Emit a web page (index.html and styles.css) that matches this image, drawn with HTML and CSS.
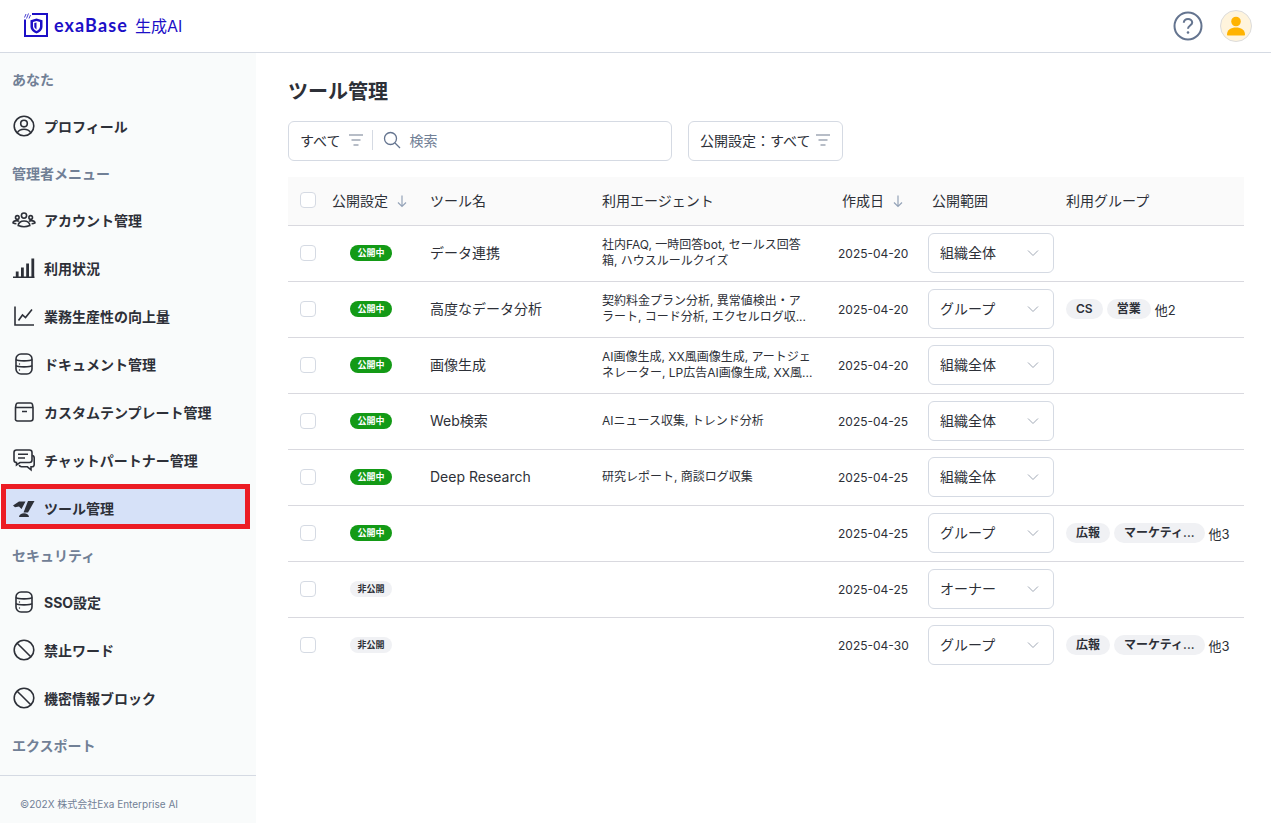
FILE: index.html
```html
<!DOCTYPE html>
<html lang="ja">
<head>
    <meta charset="UTF-8">
    <meta name="viewport" content="width=device-width, initial-scale=1.0">
    <title>ツール管理</title>
    <link rel="stylesheet" href="styles.css">
</head>
<body>
    <svg class="sprite" width="0" height="0">
        <symbol id="i-user" viewBox="0 0 24 24"><circle cx="12" cy="12" r="9.800"/><circle cx="12" cy="9.600" r="3.300"/><path d="M5.200 18.800c1.400-2.400 3.900-3.600 6.800-3.600s5.400 1.200 6.800 3.600"/></symbol>
        <symbol id="i-group" viewBox="0 0 24 24"><circle cx="12" cy="7.600" r="2.600"/><circle cx="5.300" cy="9.400" r="1.800"/><circle cx="18.700" cy="9.400" r="1.800"/><path d="M6.200 17.600c0-2.800 2.600-4.600 5.800-4.600s5.800 1.800 5.800 4.600c-3.400 1.400-8.200 1.400-11.600 0z"/><path d="M4.400 15.800c-1.500-.1-2.700-.5-3.400-1 .3-1.400 1.800-2.200 3.500-2.200 1 0 1.800.2 2.500.7"/><path d="M19.600 15.800c1.500-.1 2.700-.5 3.400-1-.3-1.400-1.800-2.200-3.500-2.200-1 0-1.800.2-2.500.7"/></symbol>
        <symbol id="i-bars" viewBox="0 0 24 24"><path class="fill" d="M1 20.600h21.500v1.400H1zM3.800 15.500h2.800v5.100H3.800zM9 11.500h2.800v9.100H9zM14.200 7.500H17v13.100h-2.800zM19.400 2.500h2.800v18.100h-2.800z"/></symbol>
        <symbol id="i-chart" viewBox="0 0 24 24"><path d="M3 2.500V21h19"/><path d="M6.500 16.500l4-5.500 3 2.500 6.500-8"/></symbol>
        <symbol id="i-db" viewBox="0 0 24 24"><rect x="4" y="2" width="16" height="20" rx="5"/><path d="M4 7.500c1.500 1.800 14.500 1.800 16 0M4 13.500c1.500 1.800 14.500 1.800 16 0"/><circle class="fill" cx="7.500" cy="12" r=".7"/><circle class="fill" cx="7.500" cy="18" r=".7"/></symbol>
        <symbol id="i-box" viewBox="0 0 24 24"><path d="M6.500 3h12c1 0 1.800.7 2 1.700l.5 2.800v11c0 1.400-1.100 2.500-2.500 2.500h-13C4.100 21 3 19.900 3.500 18.500v-11l.5-2.800C4.200 3.700 5 3 6 3z"/><path d="M3.800 7.500h17M10 11.500h5"/></symbol>
        <symbol id="i-chat" viewBox="0 0 24 24"><path d="M4.500 2h13c1.400 0 2.500 1.100 2.500 2.500v7.500c0 1.400-1.100 2.500-2.500 2.500H8L4.500 17v-2.500C3 14.500 2 13.400 2 12V4.500C2 3.100 3.100 2 4.500 2z"/><path d="M6 6.300h10M6 10h7"/><path d="M20.200 7.500c1.200.2 2 1.200 2 2.400v6.600c0 1.300-1 2.300-2.300 2.300h-.9v3l-3.600-3H9.500c-1.100 0-2-.7-2.300-1.700"/></symbol>
        <symbol id="i-tool" viewBox="0 0 24 24"><path class="fill" d="M1 9.500L7 5.500h6.500L9.500 13 7 10.500l-4 .8z"/><path class="fill" d="M16 5h6.500L16 16.500h-4.500z"/><path class="fill" d="M7 21c.3-2.500 2.400-3.700 5-3.700s4.700 1.200 5 3.700z"/></symbol>
        <symbol id="i-ban" viewBox="0 0 24 24"><circle cx="12" cy="12" r="9.800"/><path d="M5.200 5.200l13.600 13.600"/></symbol>
        <symbol id="i-filter" viewBox="0 0 16 16"><path d="M1 3h14M3.500 8h9M5.500 13h5"/></symbol>
        <symbol id="i-down" viewBox="0 0 12 14"><path d="M6 1.500v11M2 8.500l4 4 4-4"/></symbol>
        <symbol id="i-chev" viewBox="0 0 12 12"><path d="M1 3.500l5 5 5-5"/></symbol>
    </svg>

    <header class="topbar">
        <div class="logo">
            <svg class="logo-mark" viewBox="0 0 24 24" width="24" height="24">
                <path class="logo-line" d="M1 6.500v16.500h22V1H8"/>
                <path class="logo-line thin" d="M.5 4.500l1.500-3.500M2.500 5.500L4.500 .5M5 5.500l1.500-3.500"/>
                <path class="logo-shield" d="M12.500 5.500l6 1.800v6.200c0 3.500-3 6-6 7-3-1-6-3.500-6-7V7.300z"/>
                <path class="logo-dot" d="M12.500 8l3.500 1.100v4.300c0 2.200-1.700 3.800-3.500 4.600-1.800-.8-3.500-2.400-3.500-4.600V9.100z"/>
                <path class="logo-shield" d="M12.500 9.500v7c-1.300-.7-2.200-1.900-2.200-3.200v-3.200z"/>
            </svg>
            <span class="logo-name">exaBase</span>
            <span class="logo-sub">生成AI</span>
        </div>
        <div class="top-actions">
            <svg class="help" viewBox="0 0 30 30" width="30" height="30">
                <circle cx="15" cy="15" r="13.500"/>
                <path d="M10.800 11.800c0-2.400 1.900-3.900 4.200-3.900s4.200 1.500 4.200 3.600c0 3-4.200 3.100-4.200 6.200"/>
                <circle class="dot" cx="15" cy="21.500" r="1.300"/>
            </svg>
            <div class="avatar">
                <svg viewBox="0 0 32 32" width="32" height="32">
                    <circle cx="16" cy="11.500" r="4.800"/>
                    <path d="M7 24.500c0-4.500 4-7 9-7s9 2.500 9 7c0 .6-.4 1-1 1H8c-.6 0-1-.4-1-1z"/>
                </svg>
            </div>
        </div>
    </header>

    <div class="layout">
        <aside class="sidebar">
            <nav class="nav">
                <div class="nav-title">あなた</div>
                <a class="nav-item"><svg class="nav-icon"><use href="#i-user"/></svg>プロフィール</a>
                <div class="nav-title">管理者メニュー</div>
                <a class="nav-item"><svg class="nav-icon"><use href="#i-group"/></svg>アカウント管理</a>
                <a class="nav-item"><svg class="nav-icon"><use href="#i-bars"/></svg>利用状況</a>
                <a class="nav-item"><svg class="nav-icon"><use href="#i-chart"/></svg>業務生産性の向上量</a>
                <a class="nav-item"><svg class="nav-icon"><use href="#i-db"/></svg>ドキュメント管理</a>
                <a class="nav-item"><svg class="nav-icon"><use href="#i-box"/></svg>カスタムテンプレート管理</a>
                <a class="nav-item"><svg class="nav-icon"><use href="#i-chat"/></svg>チャットパートナー管理</a>
                <a class="nav-item active"><svg class="nav-icon"><use href="#i-tool"/></svg>ツール管理</a>
                <div class="nav-title">セキュリティ</div>
                <a class="nav-item"><svg class="nav-icon"><use href="#i-db"/></svg>SSO設定</a>
                <a class="nav-item"><svg class="nav-icon"><use href="#i-ban"/></svg>禁止ワード</a>
                <a class="nav-item"><svg class="nav-icon"><use href="#i-ban"/></svg>機密情報ブロック</a>
                <div class="nav-title">エクスポート</div>
            </nav>
            <footer class="copyright">©202X 株式会社Exa Enterprise AI</footer>
        </aside>

        <main class="main">
            <h1>ツール管理</h1>

            <div class="filters">
                <div class="search-box">
                    <span class="filter-label">すべて</span>
                    <svg class="filter-icon"><use href="#i-filter"/></svg>
                    <span class="divider"></span>
                    <svg class="search-icon" viewBox="0 0 18 18" width="18" height="18"><circle cx="7.500" cy="7.500" r="6"/><path d="M12 12l5 5"/></svg>
                    <span class="search-placeholder">検索</span>
                </div>
                <div class="filter-btn">
                    <span class="filter-label">公開設定：すべて</span>
                    <svg class="filter-icon"><use href="#i-filter"/></svg>
                </div>
            </div>

            <table class="tools">
                <colgroup>
                    <col class="c-check"><col class="c-status"><col class="c-name"><col class="c-agent"><col class="c-date"><col class="c-scope"><col class="c-group">
                </colgroup>
                <thead>
                    <tr>
                        <th class="cell-check"><span class="check"></span></th>
                        <th>公開設定<svg class="sort"><use href="#i-down"/></svg></th>
                        <th>ツール名</th>
                        <th>利用エージェント</th>
                        <th class="th-date">作成日<svg class="sort"><use href="#i-down"/></svg></th>
                        <th class="th-date">公開範囲</th>
                        <th>利用グループ</th>
                    </tr>
                </thead>
                <tbody>
                    <tr>
                        <td class="cell-check"><span class="check"></span></td>
                        <td><span class="badge on">公開中</span></td>
                        <td class="name">データ連携</td>
                        <td><div class="agents">社内FAQ, 一時回答bot, セールス回答<br>箱, ハウスルールクイズ</div></td>
                        <td class="date">2025-04-20</td>
                        <td><div class="select"><span class="select-text">組織全体</span><svg class="chev"><use href="#i-chev"/></svg></div></td>
                        <td></td>
                    </tr>
                    <tr>
                        <td class="cell-check"><span class="check"></span></td>
                        <td><span class="badge on">公開中</span></td>
                        <td class="name">高度なデータ分析</td>
                        <td><div class="agents">契約料金プラン分析, 異常値検出・ア<br>ラート, コード分析, エクセルログ収...</div></td>
                        <td class="date">2025-04-20</td>
                        <td><div class="select"><span class="select-text">グループ</span><svg class="chev"><use href="#i-chev"/></svg></div></td>
                        <td><div class="groups"><span class="tag">CS</span><span class="tag">営業</span><span class="more">他2</span></div></td>
                    </tr>
                    <tr>
                        <td class="cell-check"><span class="check"></span></td>
                        <td><span class="badge on">公開中</span></td>
                        <td class="name">画像生成</td>
                        <td><div class="agents">AI画像生成, XX風画像生成, アートジェ<br>ネレーター, LP広告AI画像生成, XX風...</div></td>
                        <td class="date">2025-04-20</td>
                        <td><div class="select"><span class="select-text">組織全体</span><svg class="chev"><use href="#i-chev"/></svg></div></td>
                        <td></td>
                    </tr>
                    <tr>
                        <td class="cell-check"><span class="check"></span></td>
                        <td><span class="badge on">公開中</span></td>
                        <td class="name">Web検索</td>
                        <td><div class="agents">AIニュース収集, トレンド分析</div></td>
                        <td class="date">2025-04-25</td>
                        <td><div class="select"><span class="select-text">組織全体</span><svg class="chev"><use href="#i-chev"/></svg></div></td>
                        <td></td>
                    </tr>
                    <tr>
                        <td class="cell-check"><span class="check"></span></td>
                        <td><span class="badge on">公開中</span></td>
                        <td class="name">Deep Research</td>
                        <td><div class="agents">研究レポート, 商談ログ収集</div></td>
                        <td class="date">2025-04-25</td>
                        <td><div class="select"><span class="select-text">組織全体</span><svg class="chev"><use href="#i-chev"/></svg></div></td>
                        <td></td>
                    </tr>
                    <tr>
                        <td class="cell-check"><span class="check"></span></td>
                        <td><span class="badge on">公開中</span></td>
                        <td></td>
                        <td></td>
                        <td class="date">2025-04-25</td>
                        <td><div class="select"><span class="select-text">グループ</span><svg class="chev"><use href="#i-chev"/></svg></div></td>
                        <td><div class="groups"><span class="tag">広報</span><span class="tag">マーケティ...</span><span class="more">他3</span></div></td>
                    </tr>
                    <tr>
                        <td class="cell-check"><span class="check"></span></td>
                        <td><span class="badge off">非公開</span></td>
                        <td></td>
                        <td></td>
                        <td class="date">2025-04-25</td>
                        <td><div class="select"><span class="select-text">オーナー</span><svg class="chev"><use href="#i-chev"/></svg></div></td>
                        <td></td>
                    </tr>
                    <tr class="last">
                        <td class="cell-check"><span class="check"></span></td>
                        <td><span class="badge off">非公開</span></td>
                        <td></td>
                        <td></td>
                        <td class="date">2025-04-30</td>
                        <td><div class="select"><span class="select-text">グループ</span><svg class="chev"><use href="#i-chev"/></svg></div></td>
                        <td><div class="groups"><span class="tag">広報</span><span class="tag">マーケティ...</span><span class="more">他3</span></div></td>
                    </tr>
                </tbody>
            </table>
        </main>
    </div>
</body>
</html>
```

FILE: styles.css
```css
* {
    box-sizing: border-box;
}

html, body {
    height: 100%;
}

body {
    margin: 0;
    font-family: Inter, "Noto Sans CJK JP", sans-serif;
    color: #2d3038;
    background-color: white;
    overflow: hidden;
}

.sprite {
    display: none;
}

/* header */
.topbar {
    height: 53px;
    display: flex;
    align-items: center;
    justify-content: space-between;
    padding: 0 19px 0 24px;
    border-bottom: 1px solid #d5dae3;
}

.logo {
    display: flex;
    align-items: center;
    padding-bottom: 2px;
    color: #1c0fc7;
}

.logo-mark {
    margin-right: 6px;
}

.logo-line {
    fill: none;
    stroke: #1c0fc7;
    stroke-width: 2;
}

.logo-line.thin {
    stroke-width: 0.8;
}

.logo-shield {
    fill: #1c0fc7;
}

.logo-dot {
    fill: white;
}

.logo-name {
    font-family: Lato, sans-serif;
    font-size: 18px;
    font-weight: 700;
    letter-spacing: 1.100px;
    margin-right: 7px;
}

.logo-sub {
    font-size: 16px;
}

.top-actions {
    display: flex;
    align-items: center;
    gap: 17px;
}

.help {
    fill: none;
    stroke: #64748f;
    stroke-width: 2;
}

.help .dot {
    fill: #64748f;
    stroke: none;
}

.avatar {
    width: 32px;
    height: 32px;
    border-radius: 50%;
    background-color: #fff4dc;
    border: 1px solid #dcdcdc;
    display: flex;
    align-items: center;
    justify-content: center;
}

.avatar svg {
    fill: #ffb300;
    flex: none;
}

/* sidebar */
.layout {
    display: flex;
    height: 770px;
}

.sidebar {
    width: 256px;
    flex: none;
    background-color: #f9fbfb;
    display: flex;
    flex-direction: column;
}

.nav {
    height: 723px;
    padding-top: 3px;
    border-bottom: 1px solid #d5dae3;
}

.nav-title {
    height: 46px;
    padding-left: 12px;
    display: flex;
    align-items: center;
    font-size: 14px;
    font-weight: 700;
    color: #718096;
}

.nav-item {
    height: 48px;
    padding-left: 12px;
    display: flex;
    align-items: center;
    gap: 8px;
    font-size: 14px;
    font-weight: 700;
    color: #2d3038;
}

.nav-item.active {
    height: 45px;
    width: 249px;
    margin: 0 0 3px 1px;
    padding: 3px 0 0 6px;
    border: 5px solid #ec1c24;
    background-color: #d6e1f8;
}

.nav-icon {
    width: 24px;
    height: 24px;
    flex: none;
    fill: none;
    stroke: #2d3038;
    stroke-width: 1.600;
}

.fill {
    fill: #2d3038;
    stroke: none;
}

.copyright {
    padding: 20px 0 0 20px;
    font-size: 10px;
    color: #718096;
}

/* main */
.main {
    flex: 1;
    padding: 0 27px 0 32px;
}

h1 {
    margin: 0;
    height: 68px;
    padding-top: 6px;
    display: flex;
    align-items: center;
    font-size: 20px;
    font-weight: 700;
    color: #2d3038;
}

.filters {
    display: flex;
    gap: 16px;
    margin-bottom: 16px;
}

.search-box,
.filter-btn {
    height: 40px;
    padding-bottom: 2px;
    border: 1px solid #d5dae3;
    border-radius: 6px;
    display: flex;
    align-items: center;
    font-size: 14px;
    color: #2d3038;
}

.search-box {
    width: 384px;
    padding-left: 11px;
}

.filter-btn {
    width: 155px;
    padding-left: 11px;
}

.filter-btn .filter-icon {
    margin-left: 5px;
}

.filter-icon {
    width: 16px;
    height: 16px;
    margin-left: 8px;
    fill: none;
    stroke: #a0a8b5;
    stroke-width: 1.500;
}

.divider {
    width: 1px;
    height: 20px;
    margin-left: 8px;
    background-color: #d5dae3;
}

.search-icon {
    margin-left: 10px;
    fill: none;
    stroke: #64748f;
    stroke-width: 1.300;
}

.search-placeholder {
    margin-left: 8px;
    color: #718096;
}

.tools {
    width: 956px;
    table-layout: fixed;
    border-collapse: collapse;
}

.c-check { width: 44px; }
.c-status { width: 98px; }
.c-name { width: 172px; }
.c-agent { width: 236px; }
.c-date { width: 90px; }
.c-scope { width: 138px; }

.tools thead tr {
    height: 48px;
    background-color: #fafafa;
}

.tools th {
    padding: 0 0 2px;
    text-align: left;
    font-size: 14px;
    font-weight: 400;
    color: #2d3038;
    border-bottom: 1px solid #d9d9df;
}

.tools th.th-date {
    padding-left: 4px;
}

.tools td {
    padding: 0;
    height: 56px;
    font-size: 14px;
    border-bottom: 1px solid #d9d9df;
}

.tools td.name {
    padding-bottom: 2px;
}

.tools .last td {
    border-bottom: none;
}

.tools .cell-check {
    padding-left: 12px;
}

.check {
    display: block;
    width: 16px;
    height: 16px;
    border: 1px solid #d5dae3;
    border-radius: 4px;
    background-color: white;
}

.sort {
    width: 12px;
    height: 14px;
    margin-left: 8px;
    vertical-align: -2px;
    fill: none;
    stroke: #94a3b8;
    stroke-width: 1.200;
}

.badge {
    display: block;
    width: 42px;
    height: 16px;
    margin-left: 18px;
    border-radius: 8px;
    text-align: center;
    font-size: 9px;
    font-weight: 700;
    line-height: 16px;
}

.badge.on {
    background-color: #139a16;
    color: white;
}

.badge.off {
    background-color: #f0f1f4;
    color: #2d3038;
}

.agents {
    font-size: 12px;
    line-height: 16px;
    white-space: nowrap;
}

.tools td.date {
    font-size: 12px;
    white-space: nowrap;
}

.select {
    width: 126px;
    height: 40px;
    padding: 0 14px 0 11px;
    border: 1px solid #d5dae3;
    border-radius: 6px;
    display: flex;
    align-items: center;
    justify-content: space-between;
    font-size: 14px;
}

.select-text {
    margin-bottom: 2px;
}

.chev {
    width: 12px;
    height: 12px;
    fill: none;
    stroke: #a0a8b5;
    stroke-width: 1;
}

.groups {
    display: flex;
    align-items: center;
    gap: 4px;
    white-space: nowrap;
}

.tag {
    height: 20px;
    padding: 0 10px;
    border-radius: 10px;
    background-color: #f0f1f4;
    font-size: 12px;
    font-weight: 600;
    line-height: 20px;
}

.more {
    font-size: 13px;
}
```
